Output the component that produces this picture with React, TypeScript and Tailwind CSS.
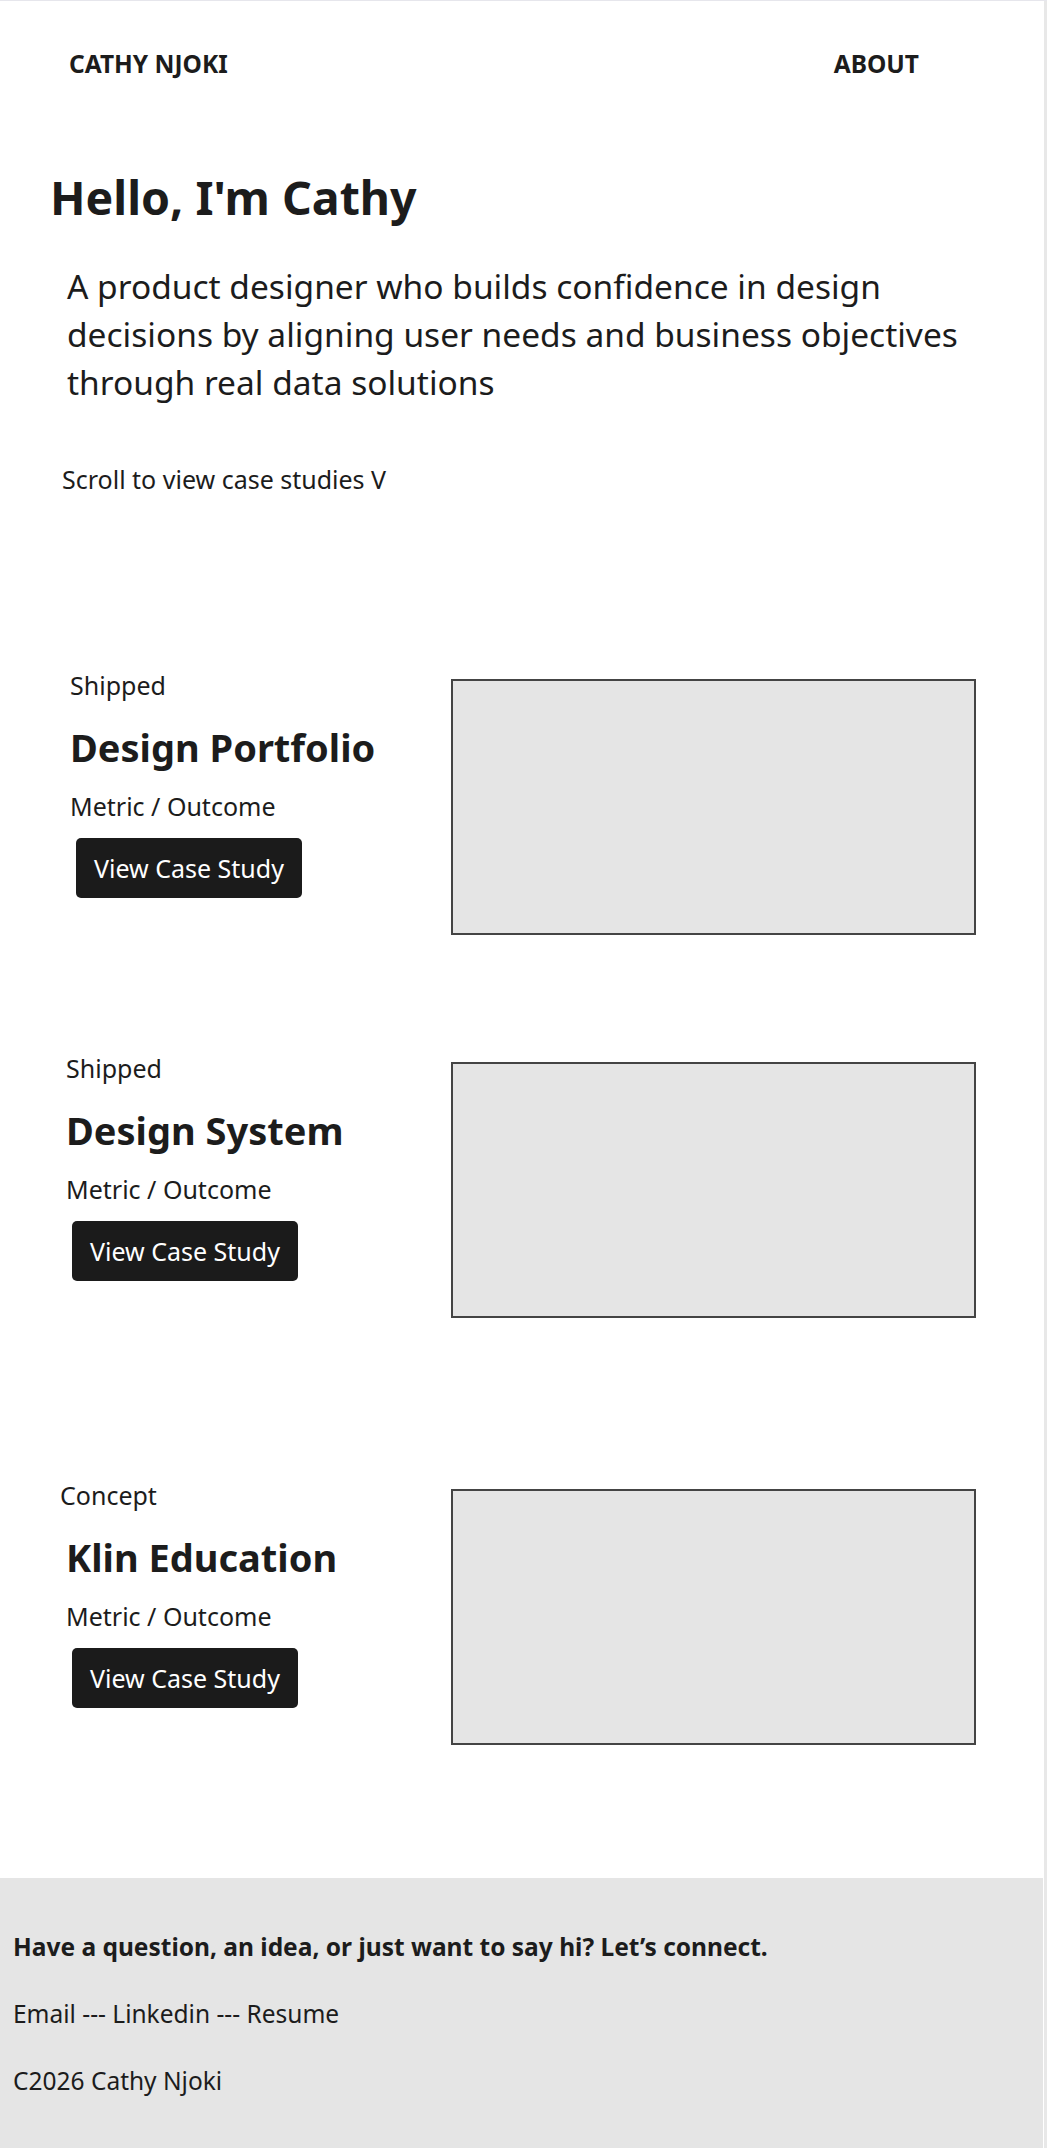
import React from "react"

type CaseStudy = {
  status: string
  title: string
  sectionClass: string
  labelClass: string
  colClass: string
}

const studies: CaseStudy[] = [
  { status: "Shipped", title: "Design Portfolio", sectionClass: "mt-[170px]", labelClass: "", colClass: "pl-[70px]" },
  { status: "Shipped", title: "Design System", sectionClass: "mt-[115px]", labelClass: "", colClass: "pl-[66px]" },
  { status: "Concept", title: "Klin Education", sectionClass: "mt-[159px]", labelClass: "-ml-[6px]", colClass: "pl-[66px]" },
]

const CaseRow = ({ study }: { study: CaseStudy }) => {
  return (
    <section className={`flex items-start ${study.sectionClass}`}>
      <div className={`w-[451px] shrink-0 flex flex-col items-start ${study.colClass}`}>
        <div className={`text-[25px] leading-[36px] ${study.labelClass}`}>{study.status}</div>
        <h2 className="mt-[22px] text-[38px] leading-[1.2] font-bold">{study.title}</h2>
        <div className="mt-[18px] text-[25px] leading-[36px]">Metric / Outcome</div>
        <button className="mt-[14px] ml-[6px] rounded-[5px] bg-[#1b1b1b] px-[18px] py-3 text-[25px] leading-[36px] text-white">
          View Case Study
        </button>
      </div>
      <div className="mt-[12px] w-[525px] h-[256px] shrink-0 border-2 border-[#444] bg-[#e5e5e5]" />
    </section>
  )
}

export default function App() {
  return (
    <div className="flex w-[1047px] min-h-[2148px] border-t border-[#e6e6ec] bg-white text-[#1c1c1c] font-['Noto_Sans','Open_Sans',sans-serif]">
      <main className="w-[1043px] shrink-0 flex flex-col">
        <header className="flex justify-between pt-[45px] pl-[69px] pr-[124px] text-[24.5px] leading-[36px] font-bold">
          <div>CATHY NJOKI</div>
          <div>ABOUT</div>
        </header>

        <h1 className="mt-[88px] pl-[50px] text-[46.5px] leading-[1.2] font-bold">Hello, I'm Cathy</h1>
        <p className="mt-[36px] pl-[67px] w-[967px] text-[33.5px] leading-[48px]">
          A product designer who builds confidence in design decisions by aligning user needs and business objectives through real data solutions
        </p>
        <div className="mt-[55px] pl-[62px] text-[25px] leading-[36px]">Scroll to view case studies V</div>

        {studies.map((s) => (
          <CaseRow key={s.title} study={s} />
        ))}

        <footer className="mt-[133px] h-[270px] bg-[#e5e5e5] pt-[51px] pl-[13px] text-[24.5px] leading-[36px] flex flex-col gap-[31px]">
          <div className="font-bold">Have a question, an idea, or just want to say hi? Let’s connect.</div>
          <div>Email --- Linkedin --- Resume</div>
          <div>C2026 Cathy Njoki</div>
        </footer>
      </main>
      <div className="ml-px w-[3px] bg-[#e8e8e8]" />
    </div>
  )
}
